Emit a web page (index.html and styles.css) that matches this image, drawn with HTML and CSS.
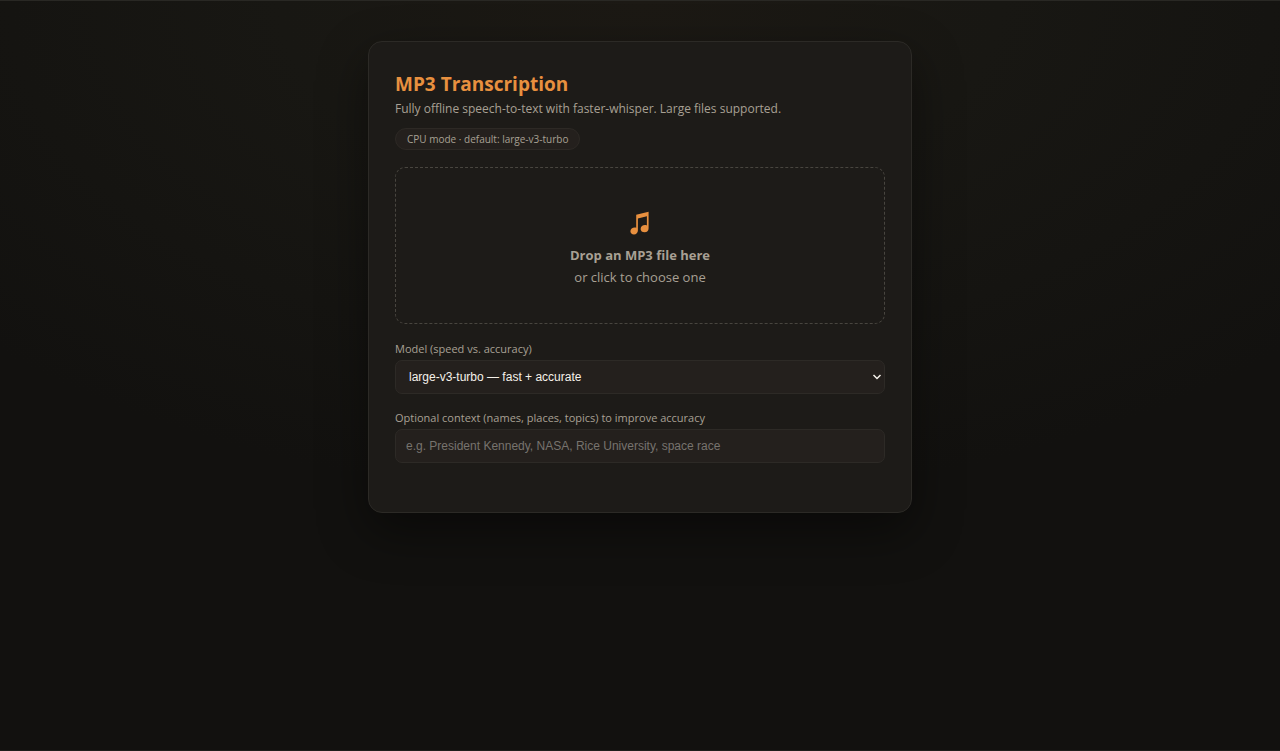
FILE: index.html
```html
<!DOCTYPE html>
<html lang="en">
<head>
<meta charset="utf-8">
<meta name="viewport" content="width=device-width, initial-scale=1">
<title>MP3 Transcription</title>
<link rel="stylesheet" href="styles.css">
</head>
<body>
<main class="card">
  <h1 class="title">MP3 Transcription</h1>
  <p class="subtitle">Fully offline speech-to-text with faster-whisper. Large files supported.</p>
  <span class="badge">CPU mode · default: large-v3-turbo</span>
  <button class="dropzone" type="button">
    <svg class="note" viewBox="0 0 20 24" aria-hidden="true">
      <path d="M6.2 3.7 18.6 0.8V17.2C18.6 19.6 17 21.2 14.6 21.2C12.2 21.2 10.6 19.9 10.6 17.9C10.6 15.5 12.8 14 15 14C15.7 14 16.4 14.1 16.9 14.4V5.2L7.9 7.4V19.6C7.9 22 6.2 23.5 4 23.5C1.8 23.5 0.4 22.2 0.4 20.3C0.4 18 2.4 16.5 4.6 16.5C5.2 16.5 5.8 16.6 6.2 16.8Z"/>
    </svg>
    <strong class="drop-title">Drop an MP3 file here</strong>
    <span class="drop-hint">or click to choose one</span>
  </button>
  <div class="field">
    <label class="label" for="model">Model (speed vs. accuracy)</label>
    <div class="select-wrap">
      <select class="control select" id="model"><option>large-v3-turbo — fast + accurate</option></select>
      <svg class="chevron" viewBox="0 0 10 8" aria-hidden="true"><path d="M1.5 2 5 5.5 8.5 2"/></svg>
    </div>
  </div>
  <div class="field">
    <label class="label" for="context">Optional context (names, places, topics) to improve accuracy</label>
    <input class="control" id="context" type="text" placeholder="e.g. President Kennedy, NASA, Rice University, space race">
  </div>
</main>
</body>
</html>
```
FILE: styles.css
```css
* { box-sizing: border-box; }

body {
  margin: 0;
  min-height: 100vh;
  padding: 40px 20px;
  border-top: 1px solid #292824;
  border-bottom: 1px solid #1f1e1b;
  background: radial-gradient(ellipse 900px 500px at 50% 0, #1c1914 0%, #181713 40%, #12110f 100%) #12110f;
  color: #a8a094;
  font-family: "Segoe UI", "Open Sans", "Noto Sans", sans-serif;
}

.card {
  max-width: 544px;
  margin: 0 auto;
  padding: 28px 26px 49px;
  border: 1px solid #2c2a26;
  border-radius: 14px;
  background: #1d1b18;
  box-shadow: 0 18px 50px rgba(0, 0, 0, 0.45);
}

.title {
  margin: 0;
  color: #e8903f;
  font-size: 19px;
  line-height: 28px;
}

.subtitle {
  margin: 0 0 9px;
  font-size: 12px;
  line-height: 21px;
}

.badge {
  display: block;
  width: fit-content;
  padding: 0 11px;
  border: 1px solid #2d2925;
  border-radius: 12px;
  background: #24201d;
  font-size: 10px;
  line-height: 20px;
}

.dropzone {
  display: flex;
  flex-direction: column;
  align-items: center;
  width: 100%;
  margin: 17px 0 16px;
  padding: 43px 16px 35px;
  border: 1px dashed #48453f;
  border-radius: 10px;
  background: transparent;
  color: inherit;
  font-family: inherit;
  font-size: 13px;
  line-height: 22px;
  cursor: pointer;
}

.note {
  width: 20px;
  height: 24px;
  margin-bottom: 9px;
  fill: #e8903f;
}

.field { margin-bottom: 15px; }
.field:last-child { margin-bottom: 0; }

.label {
  display: block;
  margin-bottom: 3px;
  font-size: 11px;
  line-height: 17px;
}

.control {
  display: block;
  width: 100%;
  height: 34px;
  padding: 0 10px;
  border: 1px solid #2d2a26;
  border-radius: 7px;
  background: #24201d;
  color: #f5f1ea;
  font-family: "Liberation Sans", Arial, sans-serif;
  font-size: 12px;
}

.control::placeholder { color: #77736e; opacity: 1; }

.select-wrap { position: relative; }

.select {
  appearance: none;
  padding: 0 24px 0 13px;
}

.chevron {
  position: absolute;
  top: 13px;
  right: 3px;
  width: 10px;
  height: 8px;
  fill: none;
  stroke: #f5f1ea;
  stroke-width: 1.5;
  pointer-events: none;
}
```
